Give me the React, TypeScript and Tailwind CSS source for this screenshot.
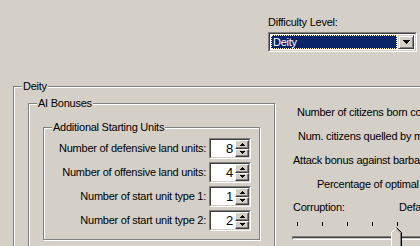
import type { ReactNode } from 'react';

const etched = 'border border-[#808080] shadow-[inset_1px_1px_0_#fff,1px_1px_0_#fff]';

function GroupBox({ label, className, children }: { label: string; className: string; children?: ReactNode }) {
  return (
    <div className={`relative ${etched} ${className}`}>
      <span className="absolute -top-[7px] left-[8px] bg-[#d4d0c8] px-[1px] leading-[13px] whitespace-nowrap">{label}</span>
      {children}
    </div>
  );
}

function SpinBox({ value }: { value: number }) {
  return (
    <div className="flex h-[21px] w-[42px] border-t border-l border-[#808080] border-b border-r border-b-white border-r-white">
      <div className="flex flex-1 border-t border-l border-[#404040] border-b border-r border-b-[#d4d0c8] border-r-[#d4d0c8] bg-white">
        <div className="flex-1 pr-[2px] text-right text-[13px] leading-[17px]">{value}</div>
        <div className="flex w-[14px] flex-col">
          {['up', 'down'].map((d) => (
            <div
              key={d}
              className="flex h-[9px] items-center justify-center border-t border-l border-white border-b border-r border-b-[#404040] border-r-[#404040] bg-[#d4d0c8] shadow-[inset_-1px_-1px_0_#808080]"
            >
              <svg width="5" height="3" viewBox="0 0 5 3">
                {d === 'up' ? <path d="M2 0h1v1h1v1h1v1H0V2h1V1h1z" fill="#000" /> : <path d="M0 0h5v1H4v1H3v1H2V2H1V1H0z" fill="#000" />}
              </svg>
            </div>
          ))}
        </div>
      </div>
    </div>
  );
}

const units = [
  { label: 'Number of defensive land units:', value: 8 },
  { label: 'Number of offensive land units:', value: 4 },
  { label: 'Number of start unit type 1:', value: 1 },
  { label: 'Number of start unit type 2:', value: 2 },
];

const bonuses = [
  { text: 'Number of citizens born content:', pad: 'pl-[5px]' },
  { text: 'Num. citizens quelled by military:', pad: 'pl-[6px]' },
  { text: 'Attack bonus against barbarians:', pad: 'pl-[1px]' },
  { text: 'Percentage of optimal cities:', pad: 'pl-[25px]' },
];

export default function App() {
  return (
    <div className="h-[246px] w-[420px] overflow-hidden bg-[#d4d0c8] font-['Liberation_Sans',Arial,sans-serif] text-[11px] tracking-[-0.25px] text-black">
      <div className="h-[86px] pl-[268px] pt-[16px]">
        <div className="leading-[13px]">Difficulty Level:</div>
        <div className="mt-[3px] flex h-[20px] w-[149px] border-t border-l border-[#808080] border-b border-r border-b-white border-r-white">
          <div className="flex flex-1 border-t border-l border-[#404040] border-b border-r border-b-[#d4d0c8] border-r-[#d4d0c8] bg-white p-[1px]">
            <div className="flex-1 border border-dotted border-[#fff6c0] bg-[#0a246a] pl-[1px] leading-[13px] text-white">Deity</div>
            <div className="ml-[1px] flex w-[16px] items-center justify-center border-t border-l border-[#d4d0c8] border-b border-r border-b-[#404040] border-r-[#404040] bg-[#d4d0c8] shadow-[inset_1px_1px_0_#fff,inset_-1px_-1px_0_#808080]">
              <svg width="7" height="4" viewBox="0 0 7 4">
                <path d="M0 0h7v1H6v1H5v1H4v1H3V3H2V2H1V1H0z" fill="#000" />
              </svg>
            </div>
          </div>
        </div>
      </div>

      <GroupBox label="Deity" className="ml-[13px] h-[220px] w-[480px]">
        <div className="flex pl-[14px] pt-[16px]">
          <GroupBox label="AI Bonuses" className="h-[200px] w-[247px] shrink-0">
            <GroupBox label="Additional Starting Units" className="ml-[14px] mt-[23px] h-[113px] w-[217px]">
              <div className="flex flex-col gap-[3px] pr-[8px] pt-[10px]">
                {units.map((u) => (
                  <div key={u.label} className="flex h-[21px] items-center justify-end gap-[3px]">
                    <span className="whitespace-nowrap leading-[13px]">{u.label}</span>
                    <SpinBox value={u.value} />
                  </div>
                ))}
              </div>
            </GroupBox>
          </GroupBox>

          <div className="ml-[17px] flex w-[200px] shrink-0 flex-col">
            <div className="mt-[3px] flex flex-col gap-[11px]">
              {bonuses.map((b) => (
                <div key={b.text} className={`whitespace-nowrap leading-[13px] ${b.pad}`}>{b.text}</div>
              ))}
            </div>
            <div className="mt-[10px] flex whitespace-nowrap pl-[1px] leading-[13px]">
              <span className="w-[106px]">Corruption:</span>
              <span>Default</span>
            </div>
            <div className="relative mt-[8px] h-[40px]">
              <div className="flex gap-[24px] pl-[5px]">
                {[0, 1, 2, 3, 4].map((i) => (
                  <div key={i} className="h-[4px] w-[1px] bg-black" />
                ))}
              </div>
              <div className="mt-[10px] h-[4px] w-[200px] border-t border-l border-[#808080] border-b border-b-white">
                <div className="h-[1px] bg-[#404040]" />
              </div>
              <svg className="absolute left-[99px] top-[5px]" width="11" height="22" viewBox="0 0 11 22">
                <path d="M0.5 22V5.5L5.5 0.5L10.5 5.5V22" fill="#d4d0c8" stroke="none" />
                <path d="M0.5 22V5.5L5.5 0.5" fill="none" stroke="#fff" />
                <path d="M5.5 0.5L10.5 5.5V22" fill="none" stroke="#000" />
                <path d="M5.5 1.9L9.5 5.9V22" fill="none" stroke="#808080" />
              </svg>
            </div>
          </div>
        </div>
      </GroupBox>
    </div>
  );
}
